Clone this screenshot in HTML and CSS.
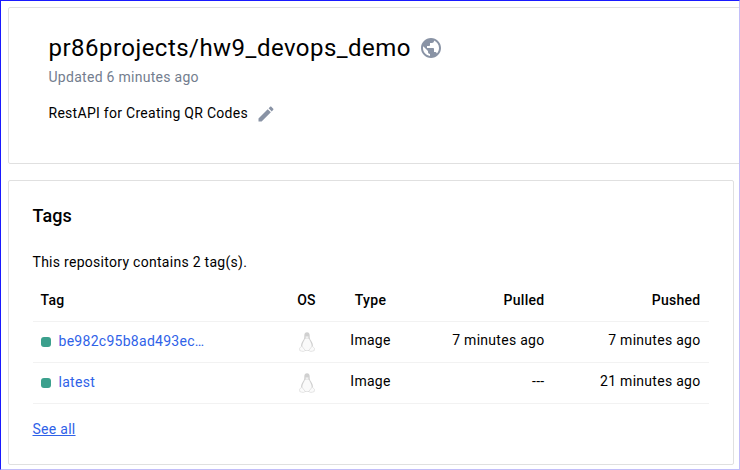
FILE: index.html
```html
<!DOCTYPE html>
<html lang="en">
<head>
<meta charset="utf-8">
<title>pr86projects/hw9_devops_demo</title>
<link rel="stylesheet" href="styles.css">
</head>
<body>
<svg class="defs" width="0" height="0" aria-hidden="true">
  <symbol id="tux" viewBox="0 0 16 20">
    <path d="M8 .3C6 .3 5.200 1.700 5.300 4c.1 2-.2 2.800-1.300 4.600C2.700 10.500 2 12.200 2 15l3 4h6l3-4c0-2.800-.7-4.500-2-6.400-1.100-1.800-1.400-2.600-1.300-4.600C10.800 1.700 10 .3 8 .3z" fill="#d0d0d0"/>
    <path d="M8 6.500c-1 .2-1.600.2-2 0-.2 1.600-2.800 4.500-2.800 8 0 2.500 2.400 4 4.800 4s4.800-1.500 4.800-4c0-3.500-2.600-6.400-2.800-8-.4.200-1 .200-2 0z" fill="#fafafa"/>
    <path d="M6.100 4.900c.8-.9 3-.9 3.800 0L8 6.700z" fill="#f0f0f0"/>
    <path d="M.5 16.300l2.300-2.300 3.300 4.300c-.4 1.600-2.600 1.300-5.300.3zM15.500 16.300L13.200 14l-3.300 4.300c.4 1.600 2.600 1.300 5.300.3z" fill="#fbfbfb" stroke="#dedede" stroke-width=".8"/>
  </symbol>
</svg>
<div class="frame">
  <section class="card repo">
    <h1 class="title">
      <span>pr86projects/hw9_devops_demo</span>
      <svg class="globe" viewBox="0 0 24 24"><path d="M12 2C6.480 2 2 6.480 2 12s4.480 10 10 10 10-4.480 10-10S17.520 2 12 2zm-1 17.930c-3.950-.49-7-3.850-7-7.930 0-.62.080-1.210.210-1.790L9 15v1c0 1.100.9 2 2 2v1.930zm6.900-2.540c-.26-.81-1-1.390-1.900-1.390h-1v-3c0-.55-.45-1-1-1H8v-2h2c.55 0 1-.45 1-1V7h2c1.100 0 2-.9 2-2v-.41c2.930 1.190 5 4.060 5 7.410 0 2.080-.8 3.970-2.100 5.390z"/></svg>
    </h1>
    <p class="updated">Updated 6 minutes ago</p>
    <p class="description">
      <span>RestAPI for Creating QR Codes</span>
      <svg class="pencil" viewBox="0 0 24 24"><path d="M3 17.250V21h3.750L17.810 9.940l-3.750-3.750L3 17.250zM20.710 7.040c.39-.39.39-1.020 0-1.410l-2.340-2.340c-.39-.39-1.020-.39-1.410 0l-1.830 1.830 3.750 3.750 1.830-1.830z"/></svg>
    </p>
  </section>
  <section class="card tags">
    <h2 class="heading">Tags</h2>
    <p class="count">This repository contains 2 tag(s).</p>
    <table class="table">
      <colgroup><col class="col-tag"><col class="col-os"><col class="col-type"><col class="col-pulled"><col class="col-pushed"></colgroup>
      <thead>
        <tr><th>Tag</th><th class="center">OS</th><th class="center">Type</th><th class="right">Pulled</th><th class="right">Pushed</th></tr>
      </thead>
      <tbody>
        <tr>
          <td><div class="tag"><i class="dot"></i><a class="link">be982c95b8ad493ec…</a></div></td>
          <td class="center"><svg class="os"><use href="#tux"/></svg></td>
          <td class="center">Image</td><td class="right">7 minutes ago</td><td class="right">7 minutes ago</td>
        </tr>
        <tr>
          <td><div class="tag"><i class="dot"></i><a class="link">latest</a></div></td>
          <td class="center"><svg class="os"><use href="#tux"/></svg></td>
          <td class="center">Image</td><td class="right">---</td><td class="right">21 minutes ago</td>
        </tr>
      </tbody>
    </table>
    <a class="link see-all">See all</a>
  </section>
</div>
</body>
</html>
```
FILE: styles.css
```css
* { box-sizing: border-box; }
body {
  margin: 0;
  background: #fff;
  color: #000;
  font: 400 14px/20px Roboto, sans-serif;
  letter-spacing: 0.28px;
}
h1, h2, p { margin: 0; font-weight: 400; }
.defs { display: block; }
.frame {
  width: 740px;
  height: 470px;
  padding: 6px 0 0 7px;
  overflow: hidden;
  border: 1px solid #1a1aff;
  border-right-color: #c2bef8;
  border-bottom-color: #c2bef8;
}
.card {
  border: 1px solid #e0e0e0;
  border-radius: 2px;
}
.repo {
  width: 740px;
  height: 157px;
  padding: 24px 40px 24px 39.5px;
}
.title {
  display: flex;
  align-items: center;
  gap: 8px;
  font-size: 24px;
  line-height: 32px;
  letter-spacing: 0.47px;
}
.globe { width: 24px; height: 24px; fill: #8993a5; }
.updated { margin-top: 3px; color: #737d8e; }
.description {
  display: flex;
  align-items: flex-start;
  gap: 8px;
  margin-top: 16px;
}
.pencil { width: 20px; height: 20px; margin-top: 1px; fill: #8993a5; }
.tags {
  width: 726px;
  height: 285px;
  margin-top: 16px;
  padding: 23px 24px 23px 23.5px;
}
.heading { font-size: 18px; font-weight: 500; line-height: 24px; letter-spacing: 0.1px; }
.count { margin-top: 24px; }
.table {
  width: 676px;
  margin-top: 8px;
  border-collapse: collapse;
  table-layout: fixed;
}
.col-tag { width: 250px; }
.col-os { width: 48px; }
.col-type { width: 80px; }
.col-pulled { width: 142px; }
.table th, .table td {
  height: 41px;
  padding: 0 8px;
  border-bottom: 1px solid #f2f2f2;
  text-align: left;
}
.table td { padding-bottom: 3px; }
.table th { font-weight: 500; }
.table .center { text-align: center; }
.table .right { text-align: right; }
.tag { display: flex; align-items: center; gap: 8px; padding-top: 2px; }
.dot { width: 10px; height: 10px; margin-top: 2px; border-radius: 3px; background: #3ba08d; }
.link { color: #2f62e8; }
.os { display: block; width: 16px; height: 20px; margin: 3px auto 0; }
.see-all { display: inline-block; margin-top: 15px; text-decoration: underline; }
```
